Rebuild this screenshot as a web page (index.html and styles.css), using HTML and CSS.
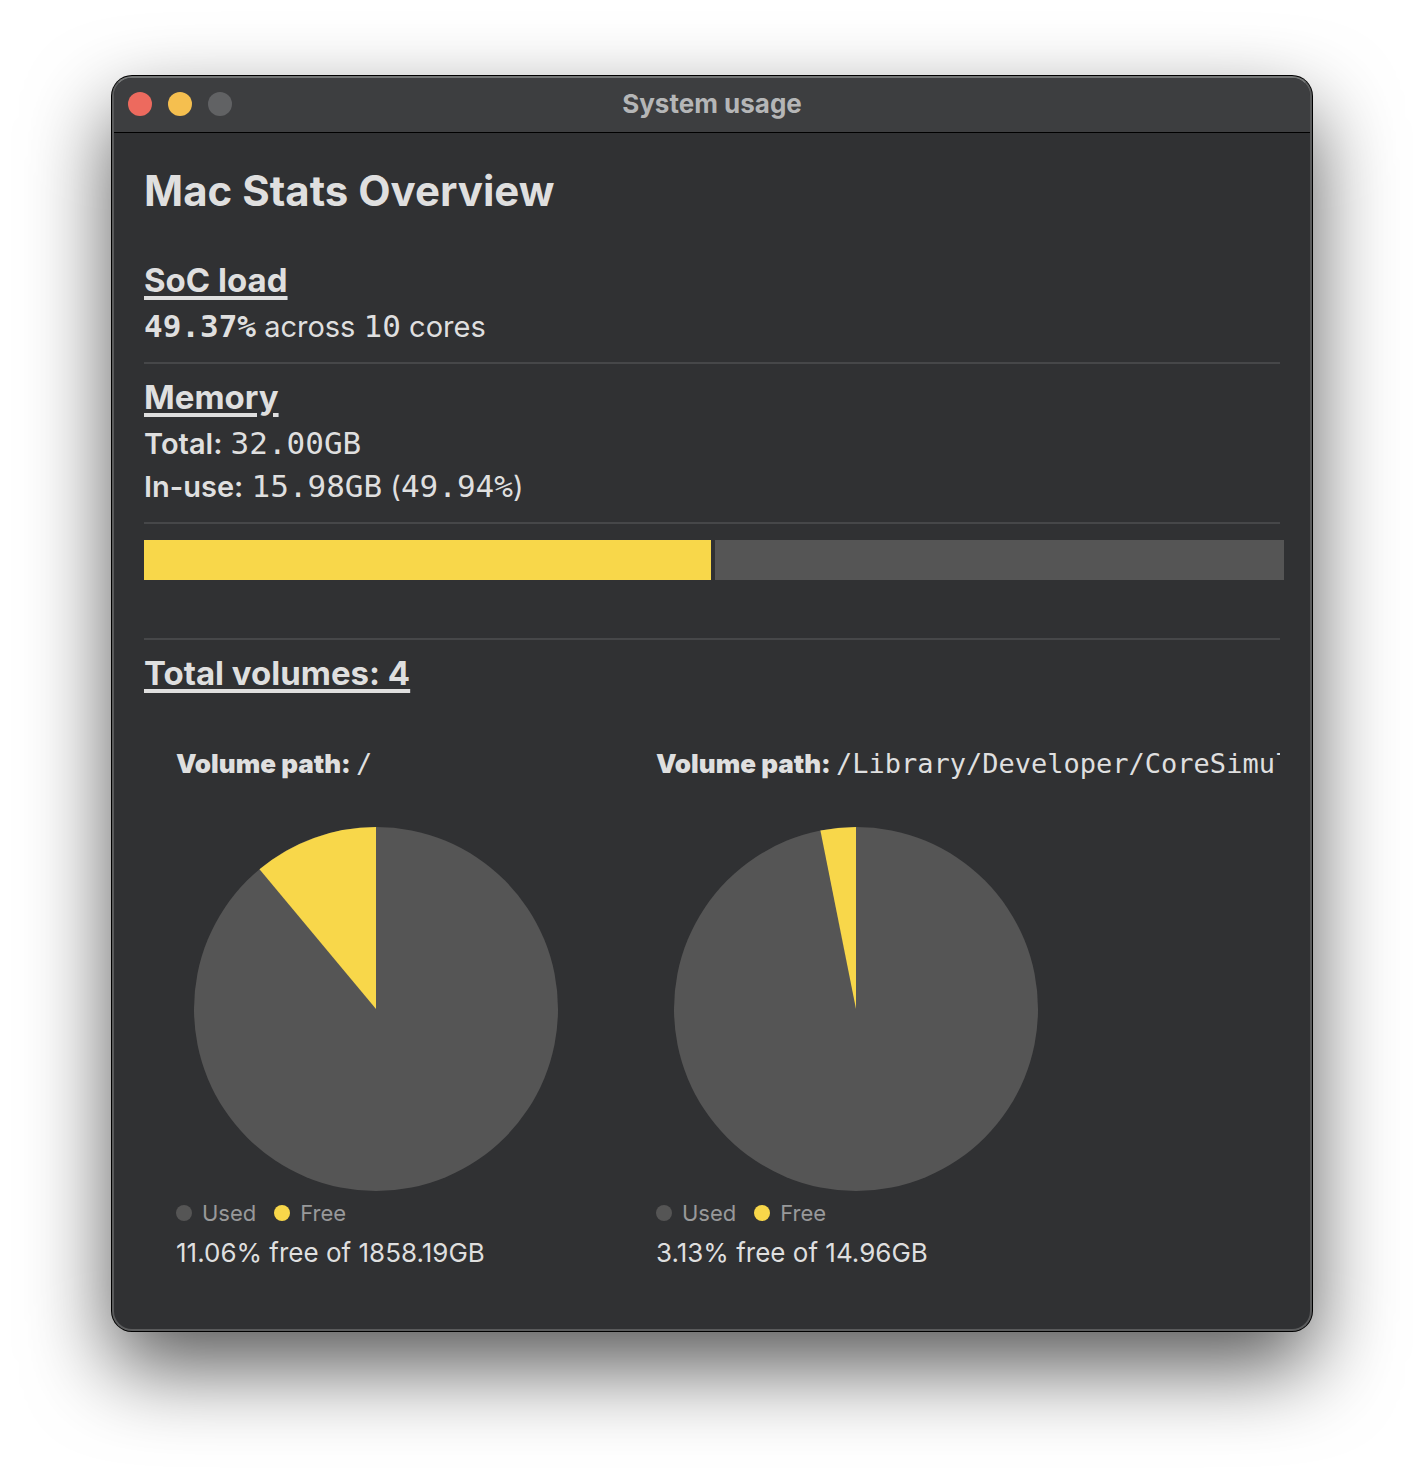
FILE: index.html
```html
<!DOCTYPE html>
<html lang="en">
<head>
<meta charset="utf-8">
<meta name="viewport" content="width=device-width, initial-scale=1">
<title>System usage</title>
<link rel="stylesheet" href="styles.css">
</head>
<body>
<div class="window">
  <header class="titlebar">
    <div class="controls">
      <button class="control control-close" type="button" aria-label="Close"></button>
      <button class="control control-minimize" type="button" aria-label="Minimize"></button>
      <button class="control" type="button" aria-label="Zoom" disabled></button>
    </div>
    <p class="window-title">System usage</p>
  </header>
  <main class="content">
    <h1 class="title">Mac Stats Overview</h1>
    <section class="section">
      <h2 class="heading">SoC load</h2>
      <p class="line"><b class="mono">49.37%</b> across <span class="mono">10</span> cores</p>
    </section>
    <section class="section">
      <h2 class="heading">Memory</h2>
      <p class="line"><b class="label">Total:</b> <span class="mono">32.00GB</span></p>
      <p class="line"><b class="label">In-use:</b> <span class="mono">15.98GB</span> (<span class="mono">49.94%</span>)</p>
    </section>
    <section class="section usage">
      <div class="bar" role="img" aria-label="Memory in use">
        <div class="bar-used" style="flex-grow: 49.94"></div>
        <div class="bar-free" style="flex-grow: 50.06"></div>
      </div>
    </section>
    <section class="volumes-section">
      <h2 class="heading">Total volumes: 4</h2>
      <div class="volumes">
        <article class="volume">
          <h3 class="path">Volume path: <span class="path-value">/</span></h3>
          <svg class="pie" viewBox="0 0 364 364" role="img" aria-label="11.06% free">
            <circle class="pie-used" cx="182" cy="182" r="182"/>
            <path class="pie-free" d="M182 182L65.5 42.2A182 182 0 0 1 182 0Z"/>
          </svg>
          <ul class="legend">
            <li class="legend-item legend-used">Used</li>
            <li class="legend-item legend-free">Free</li>
          </ul>
          <p class="summary">11.06% free of 1858.19GB</p>
        </article>
        <article class="volume">
          <h3 class="path">Volume path: <span class="path-value">/Library/Developer/CoreSimul</span></h3>
          <svg class="pie" viewBox="0 0 364 364" role="img" aria-label="3.13% free">
            <circle class="pie-used" cx="182" cy="182" r="182"/>
            <path class="pie-free" d="M182 182L146.4 3.5A182 182 0 0 1 182 0Z"/>
          </svg>
          <ul class="legend">
            <li class="legend-item legend-used">Used</li>
            <li class="legend-item legend-free">Free</li>
          </ul>
          <p class="summary">3.13% free of 14.96GB</p>
        </article>
      </div>
    </section>
  </main>
</div>
</body>
</html>
```
FILE: styles.css
```css
* {
  box-sizing: border-box;
}

body {
  margin: 0;
  padding: 76px 112px 148px;
  background: #fff;
  color: #dfdfdf;
  font-family: Inter, "Liberation Sans", sans-serif;
}

h1, h2, h3, p, ul {
  margin: 0;
  padding: 0;
}

.window {
  border: 2px solid #5a5b5c;
  border-top-color: #747676;
  border-radius: 20px;
  background: #303133;
  box-shadow: 0 0 0 1px #000, 0 36px 84px rgba(0, 0, 0, 0.66);
}

.titlebar {
  display: grid;
  grid-template-columns: 1fr auto 1fr;
  align-items: center;
  height: 55px;
  padding: 0 14px 2px;
  border-bottom: 1px solid #000;
  border-radius: 18px 18px 0 0;
  background: #3d3e40;
}

.controls {
  display: flex;
  gap: 16px;
}

.control {
  width: 24px;
  height: 24px;
  padding: 0;
  border: 0;
  border-radius: 50%;
  background: #616264;
}

.control-close {
  background: #ed6a5e;
}

.control-minimize {
  background: #f5bf4f;
}

.window-title {
  color: #b5b6b7;
  font-size: 26px;
  font-weight: 700;
  line-height: 32px;
}

.content {
  padding: 32px 30px 60px;
}

.title {
  margin-bottom: 40px;
  font-size: 42px;
  font-weight: 700;
  line-height: 52px;
}

.heading {
  margin-bottom: 2px;
  font-size: 33px;
  font-weight: 700;
  line-height: 46px;
  text-decoration: underline;
  text-decoration-thickness: 4px;
  text-underline-offset: 4px;
}

.section {
  margin-bottom: 10px;
  padding-bottom: 14px;
  border-bottom: 2px solid #464749;
}

.line {
  font-size: 29px;
  line-height: 43px;
}

.label {
  font-weight: 600;
}

.mono {
  font-family: "DejaVu Sans Mono", monospace;
  font-size: 31px;
  line-height: 1;
}

.usage {
  padding: 6px 0 58px;
}

.bar {
  display: flex;
  gap: 4px;
  height: 40px;
  margin-right: -4px;
}

.bar-used {
  background: #f8d74a;
}

.bar-free {
  background: #555;
}

.volumes {
  display: flex;
  gap: 80px;
  margin-top: 52px;
  padding-left: 32px;
  overflow: hidden;
}

.volume {
  flex: 0 0 400px;
  min-width: 0;
}

.path {
  font-size: 26px;
  font-weight: 900;
  line-height: 32px;
  white-space: nowrap;
}

.path-value {
  font-family: "DejaVu Sans Mono", monospace;
  font-size: 27px;
  font-weight: 400;
  line-height: 1;
}

.pie {
  display: block;
  width: 364px;
  margin: 47px auto 8px;
}

.pie-used {
  fill: #555;
}

.pie-free {
  fill: #f8d74a;
}

.legend {
  display: flex;
  gap: 18px;
  list-style: none;
}

.legend-item {
  display: flex;
  align-items: center;
  gap: 10px;
  color: #98999a;
  font-size: 22px;
  line-height: 28px;
}

.legend-item::before {
  width: 16px;
  height: 16px;
  border-radius: 50%;
  content: "";
}

.legend-used::before {
  background: #555;
}

.legend-free::before {
  background: #f8d74a;
}

.summary {
  margin-top: 10px;
  font-size: 26px;
  line-height: 32px;
}
```
